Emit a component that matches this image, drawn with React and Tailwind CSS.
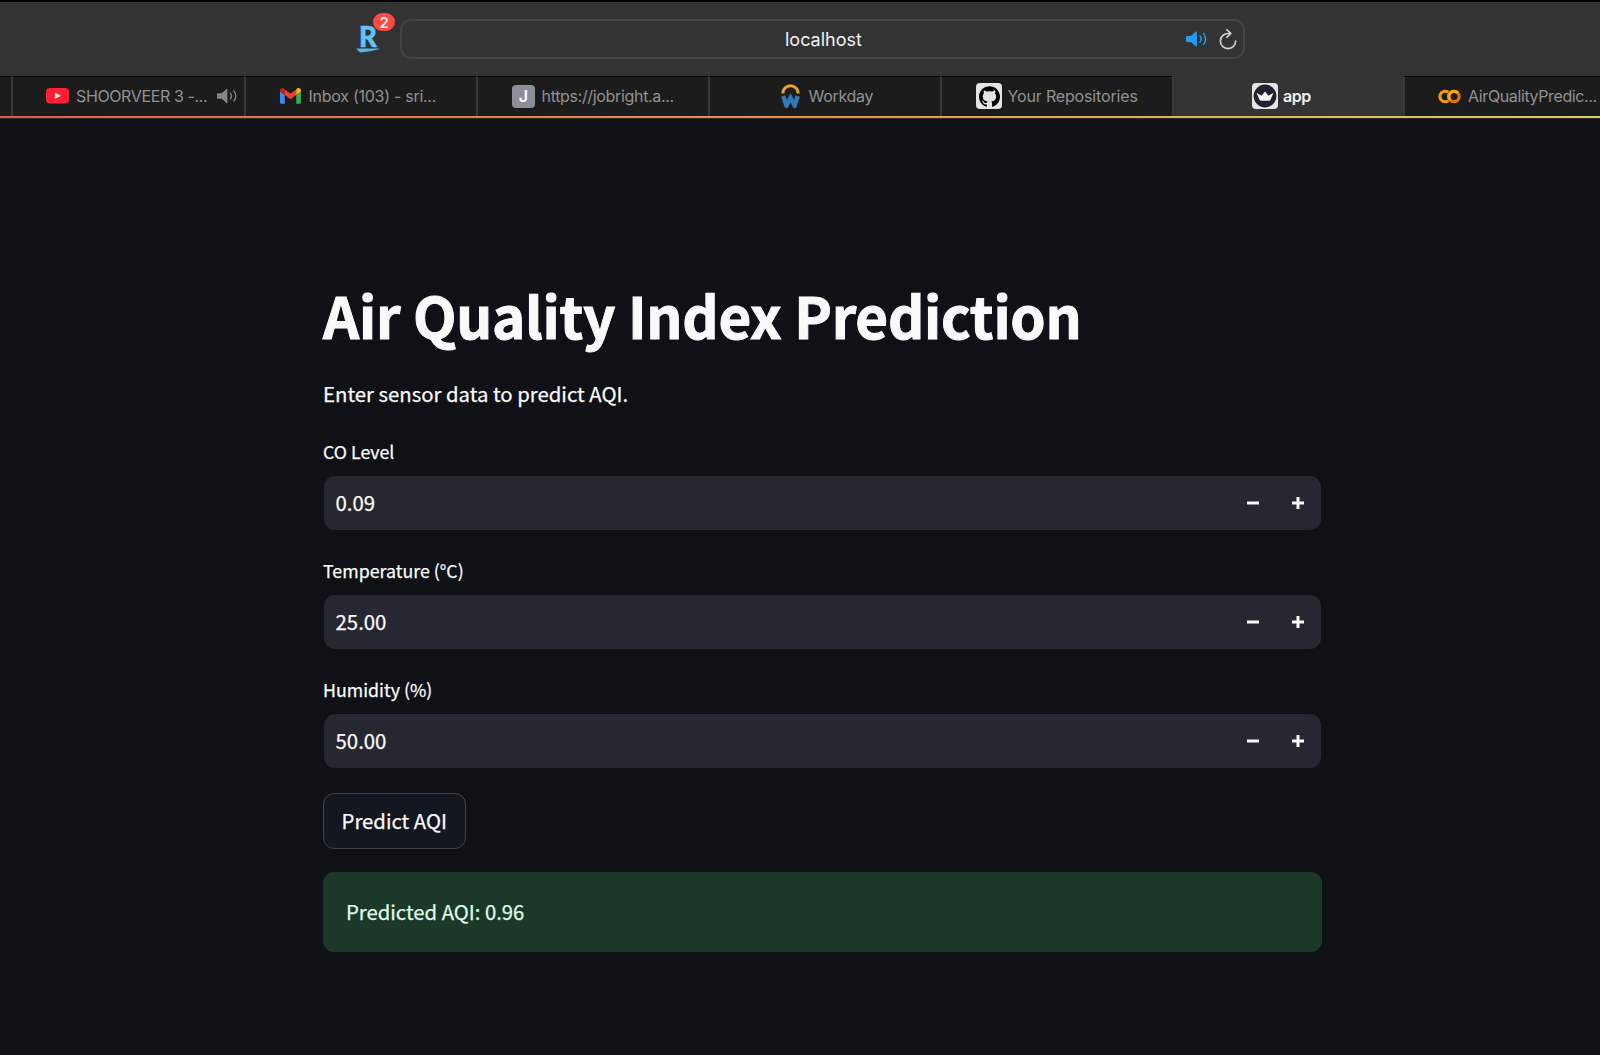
import { SiGithub } from "react-icons/si";

function Speaker({ className }) {
  return (
    <svg className={className} viewBox="0 0 22 16" fill="none">
      <path d="M0.6 5h4.2L10 0.6q.9-.5.9.5v13.8q0 1-.9.5L4.800 11H.6Q0 11 0 10.400V5.600Q0 5 .6 5Z" fill="currentColor" />
      <path d="M14 5q2.200 3 0 6M17.600 2.600q4.200 5.400 0 10.800" stroke="currentColor" strokeWidth="1.400" strokeLinecap="round" />
    </svg>
  );
}

function YouTube() {
  return (
    <svg className="h-4 w-[23px]" viewBox="0 0 23 16">
      <rect width="23" height="15.600" rx="4" fill="#ff1f35" />
      <path d="M9 4.800v6l6-3z" fill="#fff" />
    </svg>
  );
}

function Gmail() {
  return (
    <svg className="h-4 w-[21px]" viewBox="0 0 21 16">
      <path d="M0 3.500l4.800 3.600v8.700H1.400Q0 15.800 0 14.400Z" fill="#4285f4" />
      <path d="M21 3.500l-4.800 3.600v8.700h3.400q1.400 0 1.400-1.400Z" fill="#34a853" />
      <path d="M16.200 1.500v5.600L21 3.500V2.400C21 .3 18.600-.7 17 .6Z" fill="#fbbc04" />
      <path d="M0 2.400v1.100l4.800 3.600V1.500L4 .6C2.400-.7 0 .3 0 2.400Z" fill="#c5221f" />
      <path d="M4.800 7.100V1.500l5.700 4.200 5.700-4.200v5.600l-5.700 4.200Z" fill="#ea4335" />
    </svg>
  );
}

function WorkdayIcon() {
  return (
    <svg className="h-6 w-[19px]" viewBox="0 0 19 24" fill="none">
      <path d="M1.800 9.500A7.600 7.600 0 0 1 17.200 9.500" stroke="#e9a32c" strokeWidth="3" />
      <path d="M2.200 12l3.200 9.600L9.500 14l4.100 7.600L16.800 12" stroke="#2f7bb5" strokeWidth="4.400" />
    </svg>
  );
}

function Crown() {
  return (
    <svg className="size-[26px]" viewBox="0 0 26 26">
      <rect width="26" height="26" rx="4" fill="#e6e6e8" />
      <circle cx="13" cy="13" r="11.400" fill="#20222f" />
      <path d="M4.500 9.700l5 3L13 8.600l3.500 4.100 5-3-3.100 7.300q-.3.800-1 .8H8.600q-.7 0-1-.8Z" fill="#f4f4f4" />
    </svg>
  );
}

function Colab() {
  return (
    <svg className="h-[15px] w-[23px]" viewBox="0 0 23 15" fill="none" strokeWidth="3.200">
      <path d="M10.200 3.300A5.200 5.200 0 1 0 10.200 11.700" stroke="#f39a0b" />
      <circle cx="16" cy="7.500" r="5.200" stroke="#e8710a" />
      <path d="M12.300 11.200A5.200 5.200 0 0 1 19.700 3.800" stroke="#f9ab00" />
    </svg>
  );
}

function Tab({ icon, title, width = "w-[232px]", className, textClass, after }) {
  return (
    <div className={`flex h-full shrink-0 items-center border-l-2 border-l-[#393939] ${width} ${className}`}>
      {icon}
      <span className={`text-base whitespace-nowrap ${textClass}`}>{title}</span>
      {after}
    </div>
  );
}

function NumberField({ label, value }) {
  return (
    <div className="mb-[24.200px]">
      <div className="mb-[9px] h-8 text-[17.800px] leading-8">{label}</div>
      <div className="mr-[1.500px] ml-px flex h-[54px] items-center rounded-[11px] bg-[#262730] pr-[17px] pl-[11.500px]">
        <span className="-mt-0.5 flex-1 text-[20.400px] leading-8">{value}</span>
        <svg className="mr-[33px] size-3" viewBox="0 0 12 12"><path d="M0 4.500h12v3H0z" fill="#fafafa" /></svg>
        <svg className="size-3" viewBox="0 0 12 12"><path d="M0 4.500h4.500V0h3v4.500H12v3H7.500V12h-3V7.500H0z" fill="#fafafa" /></svg>
      </div>
    </div>
  );
}

export default function App() {
  return (
    <div className="h-[1055px] w-[1600px] overflow-hidden bg-[#0f1116] font-['Inter',sans-serif] text-[#fafafa]">
      <header className="flex h-[76px] items-start border-t-2 border-black bg-[#333333]">
        <div className="relative mt-[22px] ml-[356px] h-[30px] w-[24px]">
          <div className="h-6 pl-[2.500px] font-['Lato',sans-serif] text-[29px] leading-6 font-black text-[#5fc3f7] [-webkit-text-stroke:0.5px]">
            <span className="inline-block origin-left scale-x-95">R</span>
          </div>
          <svg className="h-[5px] w-[24px]" viewBox="0 0 24 5"><path d="M0 .5h24q-5 2.500-20 4Z" fill="#54b4ea" /></svg>
          <div className="absolute -top-[11px] left-[17px] flex h-[18px] w-[22px] items-center justify-center rounded-full bg-[#fb4b44] text-[15px] leading-none font-medium text-white">2</div>
        </div>
        <div className="mt-[16.500px] ml-[20px] flex h-[40.500px] w-[845px] items-center rounded-[11px] border-2 border-[#444444]">
          <span className="mt-px ml-[383px] w-[78px] text-[18px] whitespace-nowrap text-[#f2f2f2]">localhost</span>
          <Speaker className="mt-px ml-[322.500px] h-4 w-[22px] text-[#239cf5]" />
          <svg className="mt-px ml-[11px] h-[21px] w-[18px]" viewBox="0 0 18 21" fill="none" stroke="#d2d2d2" strokeWidth="1.700" strokeLinecap="round" strokeLinejoin="round">
            <path d="M10.500 4.500H9a7.600 7.600 0 1 0 7.600 7.600M8 .9l3.900 3.600L8 8.200" />
          </svg>
        </div>
      </header>
      <nav className="flex h-10 bg-[#1c1c1c] text-[#929292]">
        <div className="h-full w-[11px] shrink-0 border-t border-t-black" />
        <Tab width="w-[233px]" className="border-t border-t-black pb-px pl-[33px]" icon={<YouTube />} title="SHOORVEER 3 -..." textClass="ml-[7px] w-[133px] tracking-[-0.380px]" after={<Speaker className="ml-[7.500px] h-4 w-[21px] text-[#858585]" />} />
        <Tab className="border-t border-t-black pb-px pl-[34px]" icon={<Gmail />} title="Inbox (103) - sri..." textClass="ml-[7.500px] tracking-[-0.270px]" />
        <Tab className="border-t border-t-black pb-px pl-[34px]" icon={<span className="flex size-[23px] items-center justify-center rounded-[4px] bg-[#8e8e9b] text-base font-semibold text-white">J</span>} title="https://jobright.a..." textClass="ml-[6.500px] tracking-[-0.330px]" />
        <Tab className="border-t border-t-black pb-px pl-[70.500px]" icon={<WorkdayIcon />} title="Workday" textClass="ml-[9px] tracking-[-0.300px]" />
        <Tab className="border-t border-t-black pb-px pl-[34px]" icon={<span className="flex size-[26px] items-center justify-center rounded-[4px] bg-[#e4e4e4] text-[21px] text-black"><SiGithub /></span>} title="Your Repositories" textClass="ml-[5.500px] tracking-[-0.160px]" />
        <Tab width="w-[231px]" className="bg-[#333333] pl-[78px]" icon={<Crown />} title="app" textClass="ml-[5px] font-semibold tracking-[-0.400px] text-[#f0f0f0]" />
        <Tab width="w-[197px]" className="border-t border-t-black pb-px pl-[33px]" icon={<Colab />} title="AirQualityPredic..." textClass="ml-[7px] tracking-[-0.380px]" />
      </nav>
      <div className="h-[3px] border-b border-[#33261f] bg-linear-to-r from-[#d9624f] via-[#df9459] to-[#cdd06c]" />

      <main className="ml-[323px] w-[999px] font-['Noto_Sans_CJK_SC',sans-serif] [-webkit-text-stroke:0.25px]">
        <h1 className="pt-[155px] text-[56.500px] leading-[80px] font-bold tracking-[-0.240px] whitespace-nowrap [-webkit-text-stroke:1px]">Air Quality Index Prediction</h1>
        <p className="mt-[23px] mb-[26px] h-8 text-[20.350px] leading-8">Enter sensor data to predict AQI.</p>
        <div>
          <NumberField label="CO Level" value="0.09" />
          <NumberField label="Temperature (°C)" value="25.00" />
          <NumberField label="Humidity (%)" value="50.00" />
        </div>
        <button className="flex h-[56.500px] w-[142.500px] items-center justify-center rounded-[11px] border-[1.500px] border-[#41444c] bg-[#131720] pb-0.5 text-[20.300px] whitespace-nowrap">Predict AQI</button>
        <div className="mt-[23px] flex h-[80px] items-center rounded-[11px] bg-[#1c3829] pb-0.5 pl-[23px] text-[20.300px] text-[#dffde9]">Predicted AQI: 0.96</div>
      </main>
    </div>
  );
}
